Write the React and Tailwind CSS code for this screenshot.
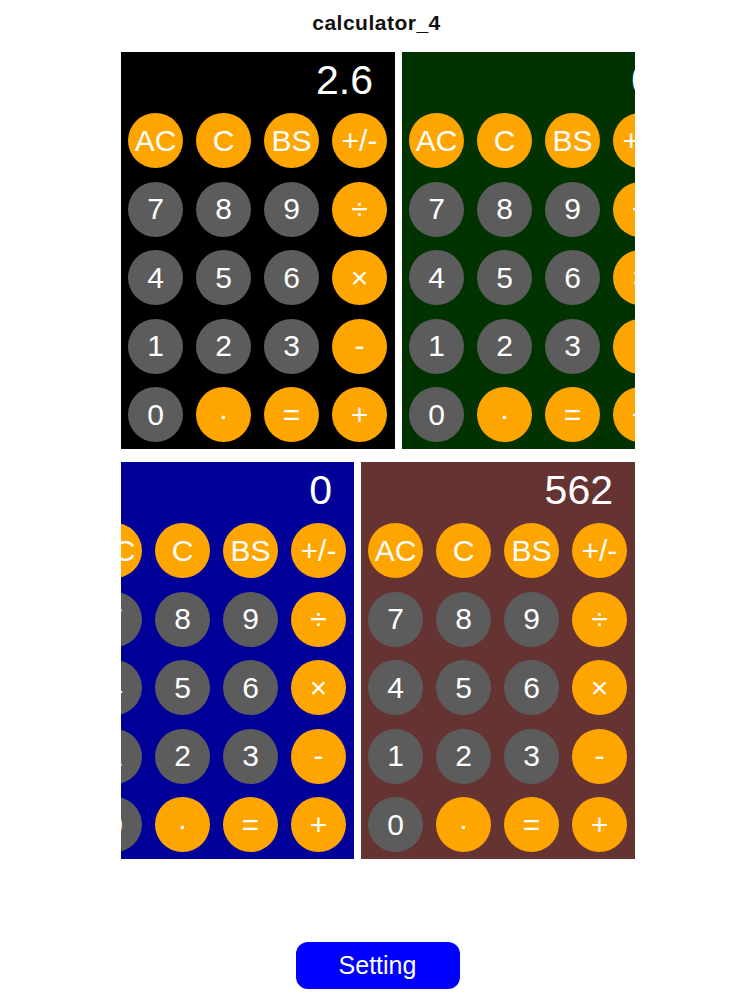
const KEYS = [
  ['AC', 'op'], ['C', 'op'], ['BS', 'op'], ['+/-', 'op'],
  ['7', 'num'], ['8', 'num'], ['9', 'num'], ['÷', 'op'],
  ['4', 'num'], ['5', 'num'], ['6', 'num'], ['×', 'op'],
  ['1', 'num'], ['2', 'num'], ['3', 'num'], ['-', 'op'],
  ['0', 'num'], ['·', 'op'], ['=', 'op'], ['+', 'op'],
]

function Calculator({ bg, value }) {
  return (
    <div className={`w-[274px] h-[397px] shrink-0 px-[7px] pt-2 ${bg}`}>
      {/* display */}
      <div className="h-[40px] leading-[40px] text-right pr-[15px] text-[41px] text-white">
        {value}
      </div>

      {/* keypad */}
      <div className="mt-[13px] grid grid-cols-[repeat(4,55px)] gap-x-[13px] gap-y-[13.5px]">
        {KEYS.map(([label, kind]) => (
          <div
            key={label}
            className={`w-[55px] h-[55px] rounded-full flex items-center justify-center text-[30px] leading-none text-white ${
              kind === 'op' ? 'bg-[#ffa500]' : 'bg-[#5c5c5c]'
            }`}
          >
            {label}
          </div>
        ))}
      </div>
    </div>
  )
}

export default function App() {
  return (
    <div className="w-[750px] h-[1000px] bg-white font-['Liberation_Sans',Arial,sans-serif]">
      <h1 className="pt-[11px] text-center text-[21px] leading-[24px] font-bold tracking-[0.5px] text-[#111] pl-[3px]">
        calculator_4
      </h1>

      {/* calculators */}
      <div className="mt-[17px] ml-[121px] w-[514px] overflow-hidden flex flex-col gap-[13px]">
        <div className="flex gap-[7px]">
          <Calculator bg="bg-black" value="2.6" />
          <Calculator bg="bg-[#003300]" value="0" />
        </div>
        <div className="flex justify-end gap-[7px]">
          <Calculator bg="bg-[#000099]" value="0" />
          <Calculator bg="bg-[#663333]" value="562" />
        </div>
      </div>

      <div className="mt-[83px] flex justify-center">
        <button className="w-[164px] h-[47px] ml-[5px] rounded-xl bg-[#0000ff] text-white text-[25px] leading-none">
          Setting
        </button>
      </div>
    </div>
  )
}
